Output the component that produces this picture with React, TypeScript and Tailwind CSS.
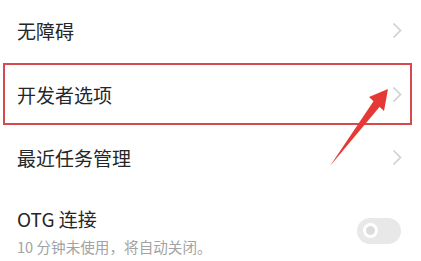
import React from "react";

const font = { fontFamily: '"Noto Sans CJK SC", "Noto Sans", sans-serif' };

function Chevron() {
  return (
    <svg width="10" height="17" viewBox="0 0 10 17" className="shrink-0">
      <path d="M1.5 1.5 L8.5 8.5 L1.5 15.5" fill="none" stroke="#cfcfcf" strokeWidth="1.6" />
    </svg>
  );
}

function Row({ title }: { title: string }) {
  return (
    <div className="flex h-[64px] items-center justify-between pl-[17px] pr-[19px]">
      <span className="text-[19px] leading-none text-[#262626]">{title}</span>
      <Chevron />
    </div>
  );
}

export default function App() {
  return (
    <div className="relative h-[261px] w-[421px] overflow-hidden bg-white" style={font}>
      <div className="flex flex-col">
        <div className="-mt-[2px]">
          <Row title="无障碍" />
        </div>
        <div className="ml-[3px] mt-[1px] flex h-[62px] w-[409px] items-center justify-between border-2 border-[#d64a4f] pl-[12px] pr-[8px]">
          <span className="text-[19px] leading-none text-[#262626]">开发者选项</span>
          <Chevron />
        </div>
        <Row title="最近任务管理" />
        <div className="flex items-center justify-between pl-[17px] pr-[20px] pt-[16px]">
          <div className="flex flex-col">
            <span className="text-[19px] leading-[28px] text-[#262626]">OTG 连接</span>
            <span className="mt-[3px] text-[14.6px] leading-[22px] text-[#a3a3a3]">10 分钟未使用，将自动关闭。</span>
          </div>
          <div className="-mt-[2px] flex h-[26px] w-[44px] items-center rounded-full bg-[#e8e8e8] pl-[6px]">
            <div className="h-[15px] w-[15px] rounded-full border-[3px] border-white bg-[#dcdcdc]" />
          </div>
        </div>
      </div>
      <svg className="absolute left-0 top-0" width="421" height="261" viewBox="0 0 421 261">
        <path d="M330 166 L375 99 L382 104 Z" fill="#e53935" />
        <path d="M388 89 L369 97 L384 111 Z" fill="#e53935" />
      </svg>
    </div>
  );
}
